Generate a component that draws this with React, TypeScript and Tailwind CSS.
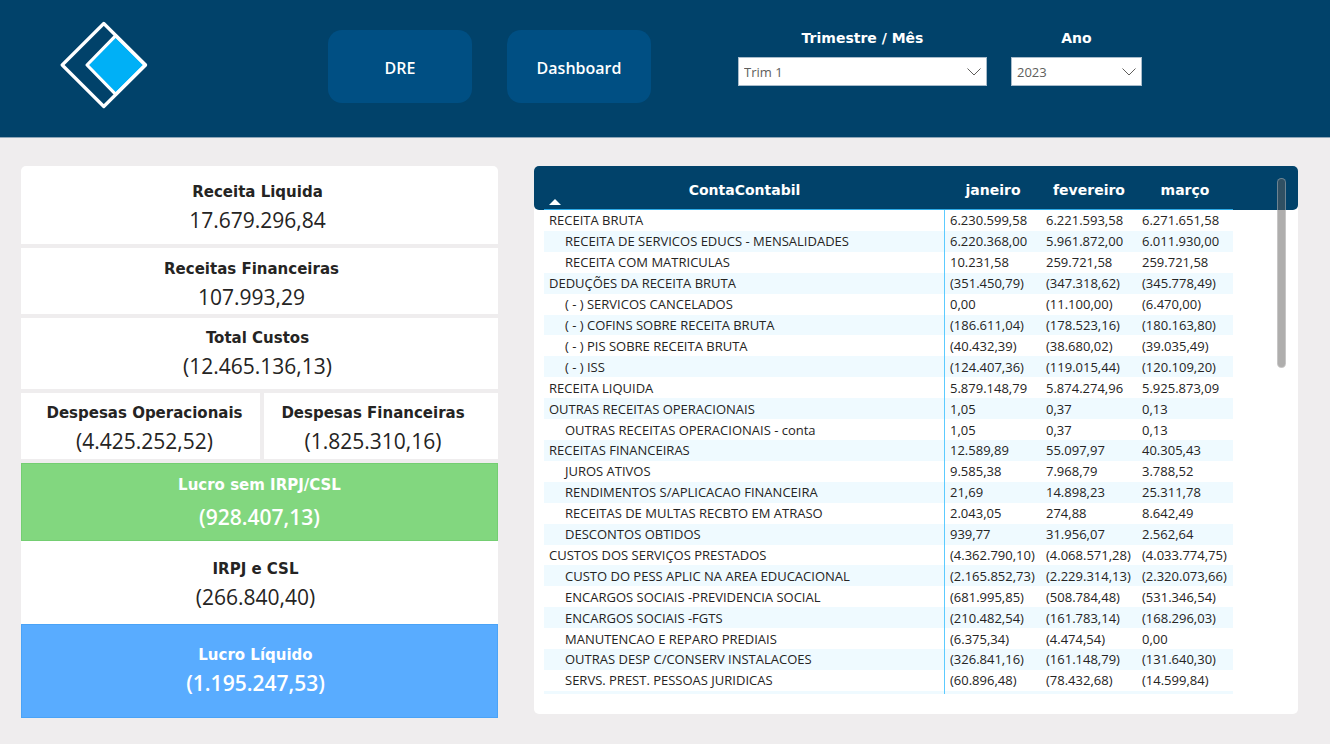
import React, { useState } from 'react';
import clsx from 'clsx';

/* ──────────────────────────── Data ──────────────────────────── */

interface AccountRow {
  name: string;
  values: [string, string, string];
  child?: boolean;
}

const months = ['janeiro', 'fevereiro', 'março'];

const rows: AccountRow[] = [
  { name: 'RECEITA BRUTA', values: ['6.230.599,58', '6.221.593,58', '6.271.651,58'] },
  { name: 'RECEITA DE SERVICOS EDUCS - MENSALIDADES', values: ['6.220.368,00', '5.961.872,00', '6.011.930,00'], child: true },
  { name: 'RECEITA COM MATRICULAS', values: ['10.231,58', '259.721,58', '259.721,58'], child: true },
  { name: 'DEDUÇÕES DA RECEITA BRUTA', values: ['(351.450,79)', '(347.318,62)', '(345.778,49)'] },
  { name: '( - ) SERVICOS CANCELADOS', values: ['0,00', '(11.100,00)', '(6.470,00)'], child: true },
  { name: '( - ) COFINS SOBRE RECEITA BRUTA', values: ['(186.611,04)', '(178.523,16)', '(180.163,80)'], child: true },
  { name: '( - ) PIS SOBRE RECEITA BRUTA', values: ['(40.432,39)', '(38.680,02)', '(39.035,49)'], child: true },
  { name: '( - ) ISS', values: ['(124.407,36)', '(119.015,44)', '(120.109,20)'], child: true },
  { name: 'RECEITA LIQUIDA', values: ['5.879.148,79', '5.874.274,96', '5.925.873,09'] },
  { name: 'OUTRAS RECEITAS OPERACIONAIS', values: ['1,05', '0,37', '0,13'] },
  { name: 'OUTRAS RECEITAS OPERACIONAIS - conta', values: ['1,05', '0,37', '0,13'], child: true },
  { name: 'RECEITAS FINANCEIRAS', values: ['12.589,89', '55.097,97', '40.305,43'] },
  { name: 'JUROS ATIVOS', values: ['9.585,38', '7.968,79', '3.788,52'], child: true },
  { name: 'RENDIMENTOS S/APLICACAO FINANCEIRA', values: ['21,69', '14.898,23', '25.311,78'], child: true },
  { name: 'RECEITAS DE MULTAS RECBTO EM ATRASO', values: ['2.043,05', '274,88', '8.642,49'], child: true },
  { name: 'DESCONTOS OBTIDOS', values: ['939,77', '31.956,07', '2.562,64'], child: true },
  { name: 'CUSTOS DOS SERVIÇOS PRESTADOS', values: ['(4.362.790,10)', '(4.068.571,28)', '(4.033.774,75)'] },
  { name: 'CUSTO DO PESS APLIC NA AREA EDUCACIONAL', values: ['(2.165.852,73)', '(2.229.314,13)', '(2.320.073,66)'], child: true },
  { name: 'ENCARGOS SOCIAIS -PREVIDENCIA SOCIAL', values: ['(681.995,85)', '(508.784,48)', '(531.346,54)'], child: true },
  { name: 'ENCARGOS SOCIAIS -FGTS', values: ['(210.482,54)', '(161.783,14)', '(168.296,03)'], child: true },
  { name: 'MANUTENCAO E REPARO PREDIAIS', values: ['(6.375,34)', '(4.474,54)', '0,00'], child: true },
  { name: 'OUTRAS DESP C/CONSERV INSTALACOES', values: ['(326.841,16)', '(161.148,79)', '(131.640,30)'], child: true },
  { name: 'SERVS. PREST. PESSOAS JURIDICAS', values: ['(60.896,48)', '(78.432,68)', '(14.599,84)'], child: true },
];

/* ──────────────────────────── Header parts ──────────────────────────── */

const Logo = () => (
  <svg width="88" height="88" viewBox="0 0 88 88" fill="none" stroke="#fff" strokeWidth="3.2" strokeLinejoin="round">
    <path d="M55.7 14.7 27 44l28.7 29.3L85.3 44Z" fill="#00b0f6" />
    <path d="M43.8 2.5 85.5 44 43.8 85.5 2.2 44Z" />
  </svg>
);

const NavButton: React.FC<{ children: React.ReactNode }> = ({ children }) => (
  <button
    type="button"
    className="h-[73px] w-36 rounded-[14px] bg-[#004f83] pt-0.5 font-['Open_Sans',sans-serif] text-[16px] font-semibold text-white"
  >
    {children}
  </button>
);

interface FilterProps {
  id: string;
  label: string;
  options: string[];
  className: string;
}

const Filter: React.FC<FilterProps> = ({ id, label, options, className }) => {
  const [value, setValue] = useState(options[0]);

  return (
    <div className={clsx('flex flex-col', className)}>
      <label
        htmlFor={id}
        className="mb-[9px] text-center font-['DejaVu_Sans',sans-serif] text-[14px] leading-5 font-bold text-white"
      >
        {label}
      </label>
      <div className="relative">
        <select
          id={id}
          value={value}
          onChange={(e) => setValue(e.target.value)}
          className="block h-[29px] w-full appearance-none border border-[#a9bccb] bg-white pt-[3px] pr-7 pl-[5px] text-[13px] text-[#605e5c]"
        >
          {options.map((option) => (
            <option key={option}>{option}</option>
          ))}
        </select>
        <svg
          className="pointer-events-none absolute top-[11px] right-1.5"
          width="14"
          height="8"
          viewBox="0 0 14 8"
          fill="none"
          stroke="#605e5c"
        >
          <path d="m.5.5 6.5 6.5L13.5.5" />
        </svg>
      </div>
    </div>
  );
};

/* ──────────────────────────── Cards ──────────────────────────── */

interface KpiCardProps {
  title: string;
  value: string;
  className: string;
}

const KpiCard: React.FC<KpiCardProps> = ({ title, value, className }) => (
  <div className={clsx('text-center', className)}>
    <h2 className="font-['DejaVu_Sans',sans-serif] text-[15px] leading-6 font-bold">{title}</h2>
    <p className="text-[21px] leading-8">{value}</p>
  </div>
);

/* ──────────────────────────── Table ──────────────────────────── */

const AccountsTable = () => (
  <section className="relative grid h-[548px] grid-cols-1 content-start rounded-[5px] bg-white">
    <div className="col-start-1 row-start-1 h-11 rounded-[5px] bg-[#01426a]" />
    <div className="z-10 col-start-1 row-start-1 mr-[65px] ml-2.5 h-[528px] overflow-hidden">
      <table className="h-[545px] w-full table-fixed border-separate border-spacing-0 text-left text-[13px] leading-5">
        <thead className="font-['DejaVu_Sans',sans-serif] text-[14px] text-white">
          <tr className="h-11">
            <th className="relative border-b border-[#2cabe8] p-0 pt-1 text-center font-bold">
              ContaContabil
              <svg className="absolute bottom-1 left-[5px]" width="12" height="6" viewBox="0 0 12 6" fill="#fff">
                <path d="M6 0l6 6H0z" />
              </svg>
            </th>
            {months.map((month) => (
              <th key={month} className="w-24 border-b border-[#2cabe8] p-0 pt-1 text-center font-bold">
                {month}
              </th>
            ))}
          </tr>
        </thead>
        <tbody>
          {rows.map((row) => (
            <tr key={row.name} className="even:bg-[#effaff]">
              <td
                className={clsx(
                  'border-r border-[#5ccbff] py-0 pr-0 whitespace-nowrap',
                  row.child ? 'pl-[21px]' : 'pl-[5px]'
                )}
              >
                {row.name}
              </td>
              {row.values.map((value, i) => (
                <td key={months[i]} className="py-0 pr-0 pl-[5px] whitespace-nowrap">
                  {value}
                </td>
              ))}
            </tr>
          ))}
          {/* Next stripe, cut by the scroll area */}
          <tr className="bg-[#effaff]">
            <td className="h-5 border-r border-[#5ccbff] p-0" />
            <td colSpan={3} className="p-0" />
          </tr>
        </tbody>
      </table>
    </div>
    {/* Scrollbar thumb, runs over the header */}
    <div className="absolute top-3 right-3 z-20 h-[190px] w-[9px] rounded-full border border-white/30 bg-[#605e5c]/50" />
  </section>
);

/* ──────────────────────────── Page ──────────────────────────── */

export default function App() {
  return (
    <div className="min-h-screen bg-[#efedee] font-['Open_Sans','Noto_Sans',sans-serif] text-[#252423]">
      <header className="grid h-[138px] grid-cols-[328fr_410fr_592fr] border-b border-[#8fa6b8] bg-[#01426a]">
        <div className="pt-[21px] pl-[60px]">
          <Logo />
        </div>
        <nav className="flex gap-[35px] pt-[30px]">
          <NavButton>DRE</NavButton>
          <NavButton>Dashboard</NavButton>
        </nav>
        <div className="flex gap-6 pt-7">
          <Filter id="trimestre" label="Trimestre / Mês" options={['Trim 1', 'Trim 2', 'Trim 3', 'Trim 4']} className="w-[249px]" />
          <Filter id="ano" label="Ano" options={['2023', '2022']} className="w-[131px]" />
        </div>
      </header>

      <main className="grid grid-cols-[477fr_764fr] items-start gap-x-9 pt-7 pr-8 pb-6 pl-[21px]">
        <section className="flex flex-col">
          <div className="flex flex-col gap-1 pb-1">
            <KpiCard title="Receita Liquida" value="17.679.296,84" className="h-[78px] rounded-t-[5px] bg-white pt-3.5 pr-1" />
            <KpiCard title="Receitas Financeiras" value="107.993,29" className="h-[66px] bg-white pt-[9px] pr-4" />
            <KpiCard title="Total Custos" value="(12.465.136,13)" className="h-[71px] bg-white pt-2 pr-1" />
            <div className="grid grid-cols-[239fr_234fr] gap-1">
              <KpiCard title="Despesas Operacionais" value="(4.425.252,52)" className="h-[66px] bg-white pt-2 pl-2" />
              <KpiCard title="Despesas Financeiras" value="(1.825.310,16)" className="h-[66px] bg-white pt-2 pr-4" />
            </div>
          </div>
          <KpiCard
            title="Lucro sem IRPJ/CSL"
            value="(928.407,13)"
            className="flex h-[78px] flex-col gap-1 border border-[#74ce72] bg-[#82d77f] pt-[9px] font-semibold text-white"
          />
          <KpiCard title="IRPJ e CSL" value="(266.840,40)" className="h-[83px] bg-white pt-4 pr-2" />
          <KpiCard
            title="Lucro Líquido"
            value="(1.195.247,53)"
            className="h-[94px] border border-[#4aa3f7] bg-[#59acff] pt-[18px] pr-2 font-semibold text-white"
          />
        </section>

        <AccountsTable />
      </main>
    </div>
  );
}
